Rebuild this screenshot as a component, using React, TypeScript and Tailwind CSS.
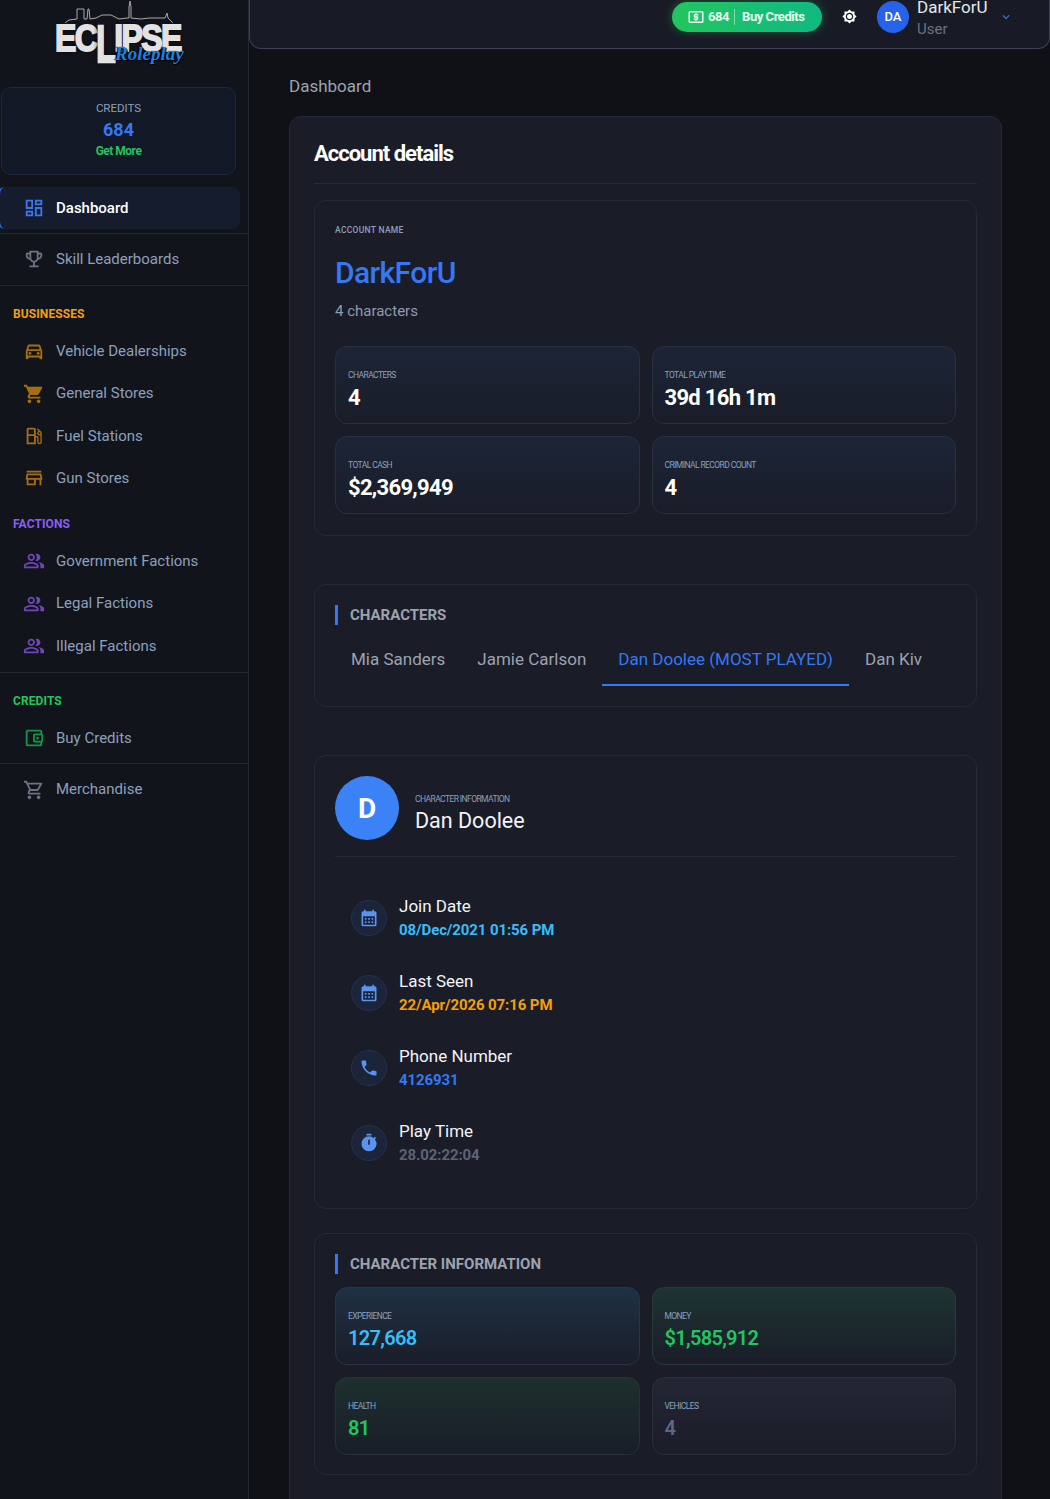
import React from "react";
import {
  MdOutlineDashboard, MdOutlineEmojiEvents, MdOutlineDirectionsCar, MdShoppingCart, MdOutlineLocalGasStation,
  MdOutlineStore, MdOutlinePeopleAlt, MdOutlineAccountBalanceWallet, MdOutlineShoppingCart, MdOutlineLocalAtm,
  MdBrightness7, MdKeyboardArrowDown, MdCalendarMonth, MdPhone, MdTimer,
} from "react-icons/md";

function Item({ icon, label, color }: { icon: React.ReactNode; label: string; color: string }) {
  return (
    <div className="flex h-[42.4px] items-center pl-[23px] text-[15px] text-[#8ba0bc]">
      <span className={`flex w-[22px] justify-center text-[22px] ${color}`}>{icon}</span>
      <span className="ml-[11px]">{label}</span>
    </div>
  );
}

function Heading({ label, color }: { label: string; color: string }) {
  return <div className={`px-[13px] text-[12px] leading-[16px] font-bold tracking-[0.1px] ${color}`}>{label}</div>;
}

function Logo() {
  return (
    <div className="relative mx-auto h-[70px] w-[140px]">
      <svg className="absolute left-[11px] top-0" width="108" height="26" viewBox="0 0 108 26" fill="none" stroke="#a8a8a8" strokeWidth="1">
        <path d="M0 23 L4 20 L12 19 L12 9 L19 9 L19 19 L22 19 L23 9 L24 9 L25 19 L31 18 L37 15 L46 15 L54 19 L62 18 L64 18 L64 7 L65 1 L66 7 L66 18 L76 19 L84 18 L92 18 L100 18 L102 13 L103 18 L108 23" />
      </svg>
      <div className="absolute left-[1px] top-[19px] origin-top-left scale-y-[1.18] font-['Liberation_Sans',sans-serif] text-[32px] leading-[32px] font-bold tracking-[-1.6px] whitespace-nowrap text-[#e2e2e2] [-webkit-text-stroke:1.5px_#e2e2e2] [text-shadow:0_0_4px_#000]">
        EC<span className="inline-block origin-top scale-y-[1.35]">L</span>IPSE
      </div>
      <div className="absolute left-[61px] top-[43px] font-['Liberation_Serif',serif] text-[19px] leading-[22px] font-bold italic text-[#1683e8] [text-shadow:1px_1px_1px_#000,-1px_0_1px_#000]">
        Roleplay
      </div>
    </div>
  );
}

function Sidebar() {
  return (
    <aside className="flex h-[1499px] w-[249px] shrink-0 flex-col overflow-hidden border-r border-[#262a36] bg-[#12141c]">
      <div className="h-[87px]"><Logo /></div>
      <div className="ml-[1px] mr-[12px] flex h-[88px] flex-col items-center rounded-[10px] border border-[#1c2740] bg-[#131827] pt-[13px]">
        <div className="text-[11.5px] leading-[14px] text-[#8ba0bc]">CREDITS</div>
        <div className="mt-[3px] text-[18px] leading-[24px] font-bold text-[#3478f6]">684</div>
        <div className="mt-[1px] text-[12px] leading-[16px] font-bold tracking-[-0.5px] text-[#22c55e]">Get More</div>
      </div>
      <div className="mt-[12px] mr-[8px] -ml-[3px] flex h-[42px] items-center rounded-[8px] border-l-[3px] border-[#2d6df0] bg-[#151c2e] pl-[23px] text-[15px] font-medium text-white">
        <span className="flex w-[22px] justify-center text-[22px] text-[#3b76f0]"><MdOutlineDashboard /></span>
        <span className="ml-[11px]">Dashboard</span>
      </div>
      <div className="mt-[4px] border-b border-[#232732]" />
      <div className="flex h-[52px] flex-col justify-center border-b border-[#232732]">
        <Item icon={<MdOutlineEmojiEvents />} label="Skill Leaderboards" color="text-[#6b7280]" />
      </div>
      <div className="mt-[20px]"><Heading label="BUSINESSES" color="text-[#f59e0b]" /></div>
      <div className="mt-[8px]">
        <Item icon={<MdOutlineDirectionsCar />} label="Vehicle Dealerships" color="text-[#a56d12]" />
        <Item icon={<MdShoppingCart />} label="General Stores" color="text-[#a56d12]" />
        <Item icon={<MdOutlineLocalGasStation />} label="Fuel Stations" color="text-[#a56d12]" />
        <Item icon={<MdOutlineStore />} label="Gun Stores" color="text-[#a56d12]" />
      </div>
      <div className="mt-[16px]"><Heading label="FACTIONS" color="text-[#8b5cf6]" /></div>
      <div className="mt-[8.4px]">
        <Item icon={<MdOutlinePeopleAlt />} label="Government Factions" color="text-[#6d47b8]" />
        <Item icon={<MdOutlinePeopleAlt />} label="Legal Factions" color="text-[#6d47b8]" />
        <Item icon={<MdOutlinePeopleAlt />} label="Illegal Factions" color="text-[#6d47b8]" />
      </div>
      <div className="mt-[4.6px] border-b border-[#232732]" />
      <div className="mt-[20px]"><Heading label="CREDITS" color="text-[#22c55e]" /></div>
      <div className="mt-[8px]"><Item icon={<MdOutlineAccountBalanceWallet />} label="Buy Credits" color="text-[#17934a]" /></div>
      <div className="mt-[4px] border-b border-[#232732]" />
      <div className="flex h-[51px] items-center">
        <div className="w-full"><Item icon={<MdOutlineShoppingCart />} label="Merchandise" color="text-[#6b7280]" /></div>
      </div>
    </aside>
  );
}

function Header() {
  return (
    <header className="-mt-[14px] flex h-[63px] items-center justify-end rounded-b-[12px] border border-t-0 border-[#3b4256] bg-[#181b25] pb-[1px]">
      <div className="flex h-[30px] w-[150px] items-center rounded-full bg-gradient-to-r from-[#22c55e] to-[#10b981] pl-[15px] text-[13px] font-bold tracking-[-0.45px] text-[#eafff2] shadow-[0_0_10px_rgba(34,197,94,0.4)]">
        <MdOutlineLocalAtm className="text-[18px]" />
        <span className="ml-[3px]">684</span>
        <span className="ml-[5px] mr-[7px] h-[16px] w-px bg-[#7fe0ae]" />
        <span>Buy Credits</span>
      </div>
      <MdBrightness7 className="ml-[20px] text-[15px] text-white" />
      <div className="ml-[20px] flex h-[32px] w-[32px] items-center justify-center rounded-full bg-[#2563eb] text-[13px] font-medium text-white">DA</div>
      <div className="ml-[8px] w-[82px]">
        <div className="text-[17px] leading-[24px] text-[#e5e7eb]">DarkForU</div>
        <div className="text-[15px] leading-[20px] text-[#6b7280]">User</div>
      </div>
      <MdKeyboardArrowDown className="mr-[36px] text-[14px] text-[#3b76f0]" />
    </header>
  );
}

function Tile({ label, value, bg, border, valueColor, small }: { label: string; value: string; bg: string; border: string; valueColor: string; small?: boolean }) {
  return (
    <div className={`flex h-[78px] flex-col rounded-[12px] border px-[12px] pt-[21px] ${bg} ${border}`}>
      <div className="text-[8.5px] leading-[14px] tracking-[-0.58px] text-[#8ba0bc]">{label}</div>
      <div className={`leading-[30px] ${small ? "text-[20px] font-semibold tracking-[-0.7px]" : "mt-[1px] text-[22px] font-bold tracking-[-0.7px]"} ${valueColor}`}>{value}</div>
    </div>
  );
}

function SectionTitle({ children }: { children: React.ReactNode }) {
  return <div className="border-l-[3px] border-[#3b76f0] pl-[12px] text-[15px] leading-[20px] font-bold text-[#9ca3af]">{children}</div>;
}

function InfoRow({ icon, label, value, color }: { icon: React.ReactNode; label: string; value: string; color: string }) {
  return (
    <div className="flex h-[75px] items-center pl-[16px]">
      <div className="flex h-[36px] w-[36px] items-center justify-center rounded-full border border-[#24324d] bg-[#1b2438] text-[20px] text-[#5b93f0]">{icon}</div>
      <div className="ml-[12px]">
        <div className="text-[17px] leading-[24px] text-[#f3f4f6]">{label}</div>
        <div className={`text-[15px] leading-[24px] font-bold tracking-[-0.1px] ${color}`}>{value}</div>
      </div>
    </div>
  );
}

const card = "rounded-[12px] border border-[#262a38] bg-[#1a1c28]";
const blue = "bg-gradient-to-b from-[#1c2436] to-[#1a1d29]";
const bd = "border-[#2a3040]";
const tab = "flex h-[50px] items-center border-b-2 border-transparent px-[16px]";

export default function App() {
  return (
    <div className="flex h-[1499px] w-[1050px] overflow-hidden bg-[#101116] font-['Roboto',sans-serif]">
      <Sidebar />
      <main className="min-w-0 flex-1">
        <Header />
        <div className="pl-[40px] pr-[48px]">
          <div className="mt-[25px] text-[17px] leading-[24px] text-[#9ca3af]">Dashboard</div>
          <section className="mt-[18px] h-[1500px] rounded-[12px] border border-[#262a38] bg-[#1a1c28] px-[24px]">
            <h1 className="h-[67px] border-b border-[#2a2d39] pt-[22px] text-[22px] leading-[30px] font-bold tracking-[-1px] text-white">Account details</h1>

            <div className={`mt-[16px] h-[336px] px-[20px] pt-[23px] ${card}`}>
              <div className="text-[8.5px] leading-[12px] font-medium tracking-[0.3px] text-[#8ba0bc]">ACCOUNT NAME</div>
              <div className="mt-[17px] text-[30px] leading-[40px] font-medium tracking-[-0.6px] text-[#3478f6]">DarkForU</div>
              <div className="mt-[7px] text-[15px] leading-[22px] text-[#8f9bad]">4 characters</div>
              <div className="mt-[24px] grid grid-cols-2 gap-[12px]">
                <Tile label="CHARACTERS" value="4" bg={blue} border={bd} valueColor="text-white" />
                <Tile label="TOTAL PLAY TIME" value="39d 16h 1m" bg={blue} border={bd} valueColor="text-white" />
                <Tile label="TOTAL CASH" value="$2,369,949" bg={blue} border={bd} valueColor="text-white" />
                <Tile label="CRIMINAL RECORD COUNT" value="4" bg={blue} border={bd} valueColor="text-white" />
              </div>
            </div>

            <div className={`mt-[48px] h-[123px] px-[20px] pt-[20px] ${card}`}>
              <SectionTitle>CHARACTERS</SectionTitle>
              <div className="mt-[11px] flex text-[17px] text-[#9ca3af]">
                <div className={tab}>Mia Sanders</div>
                <div className={tab}>Jamie Carlson</div>
                <div className="flex h-[50px] items-center border-b-2 border-[#3478f6] px-[16px] text-[#3478f6]">Dan Doolee (MOST PLAYED)</div>
                <div className={tab}>Dan Kiv</div>
              </div>
            </div>

            <div className={`mt-[48px] h-[454px] px-[20px] pt-[20px] ${card}`}>
              <div className="flex h-[81px] items-start border-b border-[#2a2d39]">
                <div className="flex h-[64px] w-[64px] items-center justify-center rounded-full bg-[#3b82f6] pt-[1px] text-[28px] font-bold text-white">D</div>
                <div className="ml-[16px] pt-[16px]">
                  <div className="text-[8.5px] leading-[14px] tracking-[-0.58px] text-[#8ba0bc]">CHARACTER INFORMATION</div>
                  <div className="mt-[1px] text-[21.5px] leading-[28px] text-[#f3f4f6]">Dan Doolee</div>
                </div>
              </div>
              <div className="mt-[23px]">
                <InfoRow icon={<MdCalendarMonth />} label="Join Date" value="08/Dec/2021 01:56 PM" color="text-[#38bdf8]" />
                <InfoRow icon={<MdCalendarMonth />} label="Last Seen" value="22/Apr/2026 07:16 PM" color="text-[#f59e0b]" />
                <InfoRow icon={<MdPhone />} label="Phone Number" value="4126931" color="text-[#3478f6]" />
                <InfoRow icon={<MdTimer />} label="Play Time" value="28.02:22:04" color="text-[#5b6475]" />
              </div>
            </div>

            <div className={`mt-[24px] h-[242px] px-[20px] pt-[20px] ${card}`}>
              <SectionTitle>CHARACTER INFORMATION</SectionTitle>
              <div className="mt-[13px] grid grid-cols-2 gap-[12px]">
                <Tile small label="EXPERIENCE" value="127,668" bg="bg-gradient-to-b from-[#1e3144] to-[#1a1d29]" border="border-[#283548]" valueColor="text-[#38bdf8]" />
                <Tile small label="MONEY" value="$1,585,912" bg="bg-gradient-to-b from-[#1d3431] to-[#1a1d29]" border="border-[#283a38]" valueColor="text-[#22c55e]" />
                <Tile small label="HEALTH" value="81" bg="bg-gradient-to-b from-[#1c302d] to-[#1a1d29]" border="border-[#263234]" valueColor="text-[#22c55e]" />
                <Tile small label="VEHICLES" value="4" bg="bg-gradient-to-b from-[#232633] to-[#1b1d29]" border="border-[#2a2d3a]" valueColor="text-[#5b6880]" />
              </div>
            </div>
          </section>
        </div>
      </main>
    </div>
  );
}
